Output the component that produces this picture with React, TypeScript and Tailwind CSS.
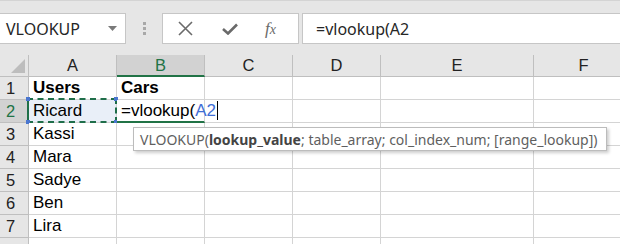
import React from "react";

const cols = [
  { l: "A", w: "w-[88px]" },
  { l: "B", w: "w-[88px]" },
  { l: "C", w: "w-[88px]" },
  { l: "D", w: "w-[88px]" },
  { l: "E", w: "w-[153px]" },
  { l: "F", w: "w-[100px]" },
];

const names = ["Users", "Ricard", "Kassi", "Mara", "Sadye", "Ben", "Lira", ""];

export default function App() {
  return (
    <div
      className="relative w-[620px] h-[244px] overflow-hidden bg-[#e6e6e6]"
      style={{ fontFamily: '"Liberation Sans", Arial, sans-serif' }}
    >
      {/* toolbar */}
      <div className="h-[55px] border-t border-[#d4d4d4] pt-[12px] flex items-start">
        <div className="ml-[-1px] w-[127px] h-[31px] bg-white border border-[#c6c6c6] flex items-center justify-between pl-[6px] pr-[8px]">
          <span className="text-[16px] text-[#262626]" style={{ fontFamily: '"Noto Sans", sans-serif' }}>
            VLOOKUP
          </span>
          <svg width="9" height="5" viewBox="0 0 9 5">
            <path d="M0 0 L9 0 L4.5 5 Z" fill="#7a7a7a" />
          </svg>
        </div>
        <div className="ml-[17px] mt-[9px] flex flex-col gap-[2px]">
          <div className="w-[3px] h-[3px] bg-[#a8a8a8]" />
          <div className="w-[3px] h-[3px] bg-[#a8a8a8]" />
          <div className="w-[3px] h-[3px] bg-[#a8a8a8]" />
        </div>
        <div className="ml-[16px] w-[137px] h-[31px] bg-white border border-[#c6c6c6] flex items-center">
          <svg className="ml-[15px]" width="15" height="15" viewBox="0 0 15 15">
            <path d="M1 1 L14 14 M14 1 L1 14" stroke="#6a6a6a" strokeWidth="1.6" />
          </svg>
          <svg className="ml-[29px]" width="16" height="12" viewBox="0 0 16 12">
            <path d="M1 6 L6 10.5 L15 1.5" stroke="#6a6a6a" strokeWidth="2.6" fill="none" />
          </svg>
          <span
            className="ml-[27px] text-[17px] italic text-[#6a6a6a] leading-none"
            style={{ fontFamily: '"Liberation Serif", serif' }}
          >
            f<span className="text-[14px]">x</span>
          </span>
        </div>
        <div className="ml-[3px] flex-1 h-[31px] bg-white border border-[#c6c6c6] border-r-0 flex items-center pl-[13px]">
          <span className="text-[16px] text-[#262626]" style={{ fontFamily: '"Noto Sans", sans-serif' }}>
            =vlookup(A2
          </span>
        </div>
      </div>

      {/* grid */}
      <div className="flex flex-col">
        {/* header row */}
        <div className="flex h-[22px]">
          <div className="w-[29px] shrink-0 border-r border-b border-[#bfbfbf] bg-[#e6e6e6] relative">
            <svg className="absolute right-[3px] bottom-[3px]" width="14" height="14" viewBox="0 0 14 14">
              <path d="M14 0 L14 14 L0 14 Z" fill="#bdbdbd" />
            </svg>
          </div>
          {cols.map((c) => (
            <div
              key={c.l}
              className={`${c.w} shrink-0 flex items-center justify-center text-[16.5px] border-r ${
                c.l === "B"
                  ? "bg-[#d2d2d2] text-[#217346] border-b-2 border-b-[#217346] border-r-[#bfbfbf]"
                  : "bg-[#e6e6e6] text-[#222] border-b border-[#bfbfbf]"
              }`}
            >
              {c.l}
            </div>
          ))}
        </div>
        {names.map((n, i) => (
          <div key={i} className="flex h-[23px]">
            <div
              className={`w-[29px] shrink-0 flex items-center pl-[6px] text-[16.5px] border-b border-[#bfbfbf] ${
                i === 1
                  ? "bg-[#d2d2d2] text-[#217346] border-r-2 border-r-[#217346]"
                  : "bg-[#e6e6e6] text-[#222] border-r border-r-[#bfbfbf]"
              }`}
            >
              {i < 7 ? i + 1 : ""}
            </div>
            {cols.map((c, j) => {
              const isA2 = i === 1 && j === 0;
              const isB2 = i === 1 && j === 1;
              return (
                <div
                  key={c.l}
                  className={`${c.w} shrink-0 border-r border-b border-[#d4d4d4] flex items-center relative ${
                    isA2 ? "bg-[#e9eff8]" : "bg-white"
                  } ${isB2 ? "border-b-2 border-b-[#217346] z-10" : ""}`}
                >
                  {j === 0 && (
                    <span className={`pl-[4px] text-[17px] text-black ${i === 0 ? "font-bold" : ""}`}>{n}</span>
                  )}
                  {j === 1 && i === 0 && <span className="pl-[4px] text-[17px] font-bold text-black">Cars</span>}
                  {isB2 && (
                    <span className="relative z-10 pl-[4px] text-[17px] text-black whitespace-nowrap flex items-center">
                      =vlookup(<span className="text-[#3f6fd6]">A2</span>
                      <span className="ml-[1px] w-[1px] h-[19px] bg-black" />
                    </span>
                  )}
                  {isA2 && (
                    <>
                      <div className="absolute left-[-2px] top-[-2px] right-[-1px] bottom-[-1px] border-2 border-dashed border-[#1f6e4a]" />
                      <div className="absolute left-[-3px] top-[-3px] w-[4px] h-[4px] bg-[#4a76cf]" />
                      <div className="absolute right-[-2px] top-[-3px] w-[4px] h-[4px] bg-[#4a76cf]" />
                      <div className="absolute left-[-3px] bottom-[-2px] w-[4px] h-[4px] bg-[#4a76cf]" />
                      <div className="absolute right-[-2px] bottom-[-2px] w-[4px] h-[4px] bg-[#4a76cf]" />
                    </>
                  )}
                </div>
              );
            })}
          </div>
        ))}
      </div>

      {/* tooltip */}
      <div
        className="absolute z-20 left-[133px] top-[127px] w-[474px] h-[24px] bg-white border border-[#bcbcbc] shadow-[2px_2px_3px_rgba(0,0,0,0.2)] flex items-center pl-[6px] text-[14px] text-[#5f5f5f] whitespace-nowrap"
        style={{ fontFamily: '"Noto Sans", sans-serif' }}
      >
        VLOOKUP(<b className="text-[#444] font-bold">lookup_value</b>; table_array; col_index_num; [range_lookup])
      </div>
    </div>
  );
}
